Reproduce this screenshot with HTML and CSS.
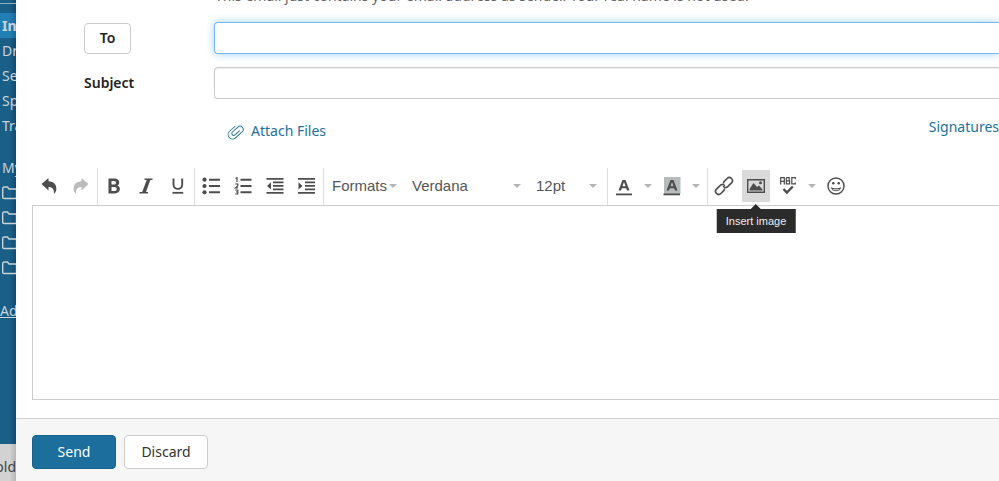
FILE: index.html
```html
<!DOCTYPE html>
<html lang="en">
<head>
<meta charset="utf-8">
<title>Compose email</title>
<link rel="stylesheet" href="styles.css">
</head>
<body>
<svg class="sprite" aria-hidden="true">
  <symbol id="folder" viewBox="0 0 16 14"><path d="M.7 11.500V2.500Q.7 1 2.200 1H5.500L7 3H13.500Q14.500 3 14.500 4.200V11.500Q14.500 12.500 13.500 12.500H2.200Q.7 12.500 .7 11.500Z" fill="none" stroke="currentColor" stroke-width="1.400"/></symbol>
  <symbol id="undo" viewBox="0 0 16 16"><path d="M.5 6L7.500 0V3.300C13 3.300 16 7 15.300 12C15 13.500 14.200 14.800 13 16C13.300 11.500 11.500 9 7.500 9V12.500Z" fill="currentColor"/></symbol>
</svg>
<aside class="sidebar">
  <nav class="mailboxes">
    <a class="box active" href="#">Inbox</a>
    <a class="box" href="#">Drafts</a>
    <a class="box" href="#">Sent</a>
    <a class="box" href="#">Spam</a>
    <a class="box" href="#">Trash</a>
    <span class="box heading">My folders</span>
    <a class="box" href="#" aria-label="Folder 1"><svg class="folder"><use href="#folder"/></svg></a>
    <a class="box" href="#" aria-label="Folder 2"><svg class="folder"><use href="#folder"/></svg></a>
    <a class="box" href="#" aria-label="Folder 3"><svg class="folder"><use href="#folder"/></svg></a>
    <a class="box" href="#" aria-label="Folder 4"><svg class="folder"><use href="#folder"/></svg></a>
    <a class="box add" href="#">Add folder</a>
  </nav>
  <div class="storage">old</div>
</aside>
<main class="compose">
  <form class="form">
    <div class="notice"><span>This email just contains your email address as sender. Your real name is not used.</span></div>
    <div class="row">
      <div class="label"><button type="button" class="btn to" id="to-label">To</button></div>
      <input class="field focused" type="text" aria-labelledby="to-label">
    </div>
    <div class="row">
      <label class="label" for="subject">Subject</label>
      <input class="field" type="text" id="subject">
    </div>
    <div class="links">
      <a class="attach" href="#"><svg class="clip" viewBox="0 0 16 16"><path transform="rotate(-42 8 8)" d="M11.500 10.200H5.200A2 2 0 0 1 5.200 6.200H13A3.400 3.400 0 0 1 13 13H3.500A4.700 4.700 0 0 1 3.500 3.600H11.500" fill="none" stroke="currentColor" stroke-width="1" stroke-linecap="round"/></svg>Attach Files</a>
      <a class="signatures" href="#">Signatures</a>
    </div>
    <div class="toolbar" role="toolbar" aria-label="Formatting">
      <div class="group">
        <button type="button" class="tool" aria-label="Undo"><svg class="arrow"><use href="#undo"/></svg></button>
        <button type="button" class="tool" aria-label="Redo" disabled><svg class="arrow flip"><use href="#undo"/></svg></button>
      </div>
      <div class="group">
        <button type="button" class="tool" aria-label="Bold"><svg viewBox="0 0 20 20"><path fill-rule="evenodd" d="M4.500 2.500H10.500C16 2.500 16.500 8.300 13.300 9.600C17.500 11 16.500 17.500 11 17.500H4.500ZM7.500 4.900V8.500H10.200C12.600 8.500 12.600 4.900 10.200 4.900ZM7.500 11V15.100H10.600C13.500 15.100 13.500 11 10.600 11Z" fill="currentColor"/></svg></button>
        <button type="button" class="tool" aria-label="Italic"><svg viewBox="0 0 20 20"><path d="M8.500 2.500H16.500V4H14.300L10 16H12V17.500H3.500V16H6.200L10.700 4H8.500Z" fill="currentColor"/></svg></button>
        <button type="button" class="tool" aria-label="Underline"><svg viewBox="0 0 20 20"><path d="M5.500 2.500V8.500C5.500 14.300 14.200 14.300 14.200 8.500V2.500" fill="none" stroke="currentColor" stroke-width="1.900"/><path d="M4.500 16.800H15.200" stroke="currentColor" stroke-width="1.800"/></svg></button>
      </div>
      <div class="group">
        <button type="button" class="tool" aria-label="Bullet list"><svg viewBox="0 0 20 20"><g fill="currentColor"><circle cx="3.500" cy="3.700" r="2.100"/><circle cx="3.500" cy="10" r="2.100"/><circle cx="3.500" cy="16.300" r="2.100"/></g><path d="M8 3.700H19M8 10H19M8 16.300H19" stroke="currentColor" stroke-width="1.900"/></svg></button>
        <button type="button" class="tool" aria-label="Numbered list"><svg viewBox="0 0 20 20"><path d="M7.500 3.700H18.500M7.500 10H18.500M7.500 16.300H18.500" stroke="currentColor" stroke-width="1.900"/><path d="M2.500 2.500L4 1.700V6M2.200 8H4.800V9.800L2.500 11.800H5M2.200 14H4.800V18H2.200M3 16H4.800" fill="none" stroke="currentColor" stroke-width="1.200"/></svg></button>
        <button type="button" class="tool" aria-label="Decrease indent"><svg viewBox="0 0 20 20"><path d="M1.500 2.900H18.500M8 6.400H18.500M8 9.900H18.500M8 13.400H18.500M1.500 16.900H18.500" stroke="currentColor" stroke-width="1.900"/><path d="M6 6.200V13.600L2 9.900Z" fill="currentColor"/></svg></button>
        <button type="button" class="tool" aria-label="Increase indent"><svg viewBox="0 0 20 20"><path d="M1 2.900H18M8 6.400H18M8 9.900H18M8 13.400H18M1 16.900H18" stroke="currentColor" stroke-width="1.900"/><path d="M1.500 6.200V13.600L5.500 9.900Z" fill="currentColor"/></svg></button>
      </div>
      <div class="group padded">
        <span class="pick formats"><select aria-label="Formats"><option>Formats</option></select></span>
        <span class="pick family"><select aria-label="Font family"><option>Verdana</option></select></span>
        <span class="pick size"><select aria-label="Font size"><option>12pt</option></select></span>
      </div>
      <div class="group padded">
        <button type="button" class="tool" aria-label="Text color"><svg viewBox="0 0 20 20"><path fill-rule="evenodd" d="M8.500 4H11.500L15.500 14.500H13L12.200 12.200H7.800L7 14.500H4.500ZM8.500 10.200H11.500L10 6Z" fill="currentColor"/><path d="M2 18.400H18" stroke="currentColor" stroke-width="1.800"/></svg></button>
        <button type="button" class="caret" aria-label="Text color options"></button>
        <button type="button" class="tool" aria-label="Background color"><svg viewBox="0 0 20 20"><path d="M2 1H18.500V18H2Z" fill="#b5baba"/><path fill-rule="evenodd" d="M8.500 4H11.500L15.500 14.500H13L12.200 12.200H7.800L7 14.500H4.500ZM8.500 10.200H11.500L10 6Z" fill="currentColor"/><path d="M1.500 18.400H18" stroke="currentColor" stroke-width="1.800"/></svg></button>
        <button type="button" class="caret" aria-label="Background color options"></button>
      </div>
      <div class="group">
        <button type="button" class="tool" aria-label="Insert link"><svg viewBox="0 0 20 20"><g transform="rotate(-45 10 10)" fill="none" stroke="currentColor" stroke-width="1.600"><path d="M8.700 12Q8 13.100 6.500 13.100H2.500A3.100 3.100 0 0 1 2.500 6.900H7.500A3.100 3.100 0 0 1 10.700 10.500"/><path d="M11.300 8Q12 6.900 13.500 6.900H17.500A3.100 3.100 0 0 1 17.500 13.100H12.500A3.100 3.100 0 0 1 9.300 9.500"/></g></svg></button>
        <div class="tip-anchor">
          <button type="button" class="tool hover" aria-label="Insert image" aria-describedby="tip"><svg viewBox="0 0 20 20"><path d="M1.700 3.700H18.300V16.300H1.700Z" fill="none" stroke="currentColor" stroke-width="1.400"/><path d="M3.500 14.500V13L7.500 7L11 11L13 9.500L16.500 13.500V14.500Z" fill="currentColor"/><circle cx="14.500" cy="6.800" r="1.500" fill="currentColor"/></svg></button>
          <div class="tip" id="tip" role="tooltip">Insert image</div>
        </div>
        <button type="button" class="tool" aria-label="Spellcheck"><svg viewBox="0 0 20 20"><path d="M2.700 8.500V1.700H6.300V8.500M2.700 5.300H6.300M8.300 1.700V7.900H11.600V4.900H8.300H11.200V1.700H8.300M17.300 3.200V1.700H13.800V7.900H17.300V6.400" fill="none" stroke="currentColor" stroke-width="1.200"/><path d="M5.500 13L8.800 16.500L14.800 10.500" fill="none" stroke="currentColor" stroke-width="2.400"/></svg></button>
        <button type="button" class="caret" aria-label="Spellcheck options"></button>
        <button type="button" class="tool" aria-label="Emoticons"><svg viewBox="0 0 20 20"><circle cx="10" cy="10" r="8" fill="none" stroke="currentColor" stroke-width="1.400"/><circle cx="7.300" cy="7.200" r="1.300" fill="currentColor"/><circle cx="12.700" cy="7.200" r="1.300" fill="currentColor"/><path d="M4.800 11C7 12.700 13 12.700 15.200 11C14.500 16.700 5.500 16.700 4.800 11ZM6.500 12.700C8 15 12 15 13.500 12.700C11.500 13.600 8.500 13.600 6.500 12.700Z" fill="currentColor" fill-rule="evenodd"/></svg></button>
      </div>
    </div>
    <textarea class="editor" aria-label="Message"></textarea>
  </form>
  <footer class="actions">
    <button type="button" class="btn send">Send</button>
    <button type="button" class="btn discard">Discard</button>
  </footer>
</main>
</body>
</html>
```
FILE: styles.css
```css
* { box-sizing: border-box; }
body {
  display: flex;
  min-height: 100vh;
  margin: 0;
  overflow: hidden;
  font: 14px/20px "Noto Sans", sans-serif;
  color: #333;
  background: #fff;
}
a { color: #23719a; text-decoration: none; }
button, input, select, textarea { font: inherit; color: inherit; margin: 0; }
.sprite { position: absolute; width: 0; height: 0; }

.sidebar {
  display: flex;
  flex-direction: column;
  flex: 0 0 16px;
  overflow: hidden;
  white-space: nowrap;
  color: #c9d3d8;
  background: linear-gradient(90deg, #195f87 60%, #114a72);
}
.mailboxes {
  flex: 1;
  margin-top: 3px;
  padding-top: 9px;
  border-top: 1px solid #8db0c3;
}
.box { display: flex; align-items: center; height: 25px; padding-left: 2px; color: inherit; }
.active { font-weight: 700; background: linear-gradient(90deg, #227fb3 60%, #17699e); }
.heading { margin-top: 17px; }
.add { margin: 18px 0 0; padding: 0; text-decoration: underline; }
.folder { flex: none; width: 16px; height: 14px; }
.storage {
  height: 37px;
  padding-top: 13px;
  direction: rtl;
  color: #444;
  background: linear-gradient(90deg, #d2d2d2 60%, #b5b5b5);
}

.compose { display: flex; flex-direction: column; flex: 1; min-width: 0; }
.form { display: flex; flex-direction: column; flex: 1; padding: 0 0 18px 16px; }
.notice {
  display: flex;
  align-items: flex-end;
  height: 6px;
  margin-bottom: 16px;
  padding-left: 183px;
  overflow: hidden;
  white-space: nowrap;
  color: #666;
}
.row { display: flex; align-items: center; margin-bottom: 13px; padding-left: 52px; }
.label { flex: 0 0 130px; font-weight: 600; color: #222; }
.field {
  flex: 1;
  min-width: 0;
  height: 32px;
  padding: 0 8px;
  border: 1px solid #ccc8cc;
  border-right: 0;
  border-radius: 4px 0 0 4px;
  outline: 0;
  background: #fff;
  box-shadow: inset 0 1px 1px #eee;
}
.focused { border-color: #76b7ee; box-shadow: 0 0 8px #9fd0f5; }
.btn {
  padding: 0;
  border: 1px solid #ccc;
  border-radius: 4px;
  background: #fff;
}
.to { width: 47px; height: 31px; font-weight: 600; }
.links {
  display: flex;
  justify-content: space-between;
  height: 56px;
  padding: 5px 0 0 196px;
}
.attach { display: flex; align-items: center; gap: 8px; height: 28px; }
.clip { width: 15px; height: 15px; overflow: visible; }

.toolbar { display: flex; height: 37px; padding-left: 1px; color: #4d4d4d; }
.group { display: flex; padding-top: 2px; border-right: 1px solid #ddd; }
.group:last-child { border: 0; }
.padded { padding-right: 3px; }
.tool {
  display: flex;
  align-items: center;
  justify-content: center;
  width: 28px;
  height: 32px;
  margin: 0 2px;
  padding: 0;
  border: 0;
  background: none;
}
.tool svg { width: 20px; height: 20px; }
.tool .arrow { width: 16px; height: 16px; }
.tool .flip { transform: scaleX(-1); }
.tool:disabled { color: #bbb; }
.hover { background: #dbdadb; }
.caret {
  display: flex;
  align-items: center;
  justify-content: center;
  width: 16px;
  height: 32px;
  padding: 0;
  border: 0;
  background: none;
}
.caret::after, .pick::after {
  content: "";
  border: 4px solid transparent;
  border-top-color: #b3b3ba;
  border-bottom: 0;
}
.pick {
  display: flex;
  align-items: center;
  height: 32px;
  padding: 0 7px 0 8px;
  font-family: "Liberation Sans", Arial, sans-serif;
  font-size: 15px;
  color: #555;
}
.pick select { flex: 1; min-width: 0; padding: 0; border: 0; appearance: none; background: none; }
.formats { width: 80px; }
.family { width: 124px; }
.size { width: 76px; }
.tip-anchor { position: relative; }
.tip {
  position: absolute;
  top: 39px;
  left: 50%;
  transform: translateX(-50%);
  padding: 2px 9px;
  white-space: nowrap;
  font: 11px/20px "Liberation Sans", Arial, sans-serif;
  color: #eee;
  background: #2b2b2b;
}
.tip::before {
  content: "";
  position: absolute;
  bottom: 100%;
  left: 50%;
  margin-left: -5px;
  border: 5px solid transparent;
  border-top: 0;
  border-bottom-color: #2b2b2b;
}
.editor {
  flex: 1;
  padding: 8px;
  border: 1px solid #ccc;
  border-right: 0;
  outline: 0;
  resize: none;
  background: #fff;
}
.actions {
  display: flex;
  gap: 8px;
  padding: 16px 16px 12px;
  border-top: 1px solid #d0d0d0;
  background: #f6f6f6;
}
.actions .btn { width: 84px; height: 34px; }
.actions .send { color: #fff; border-color: #17618a; background: #1c6e9c; }
```
